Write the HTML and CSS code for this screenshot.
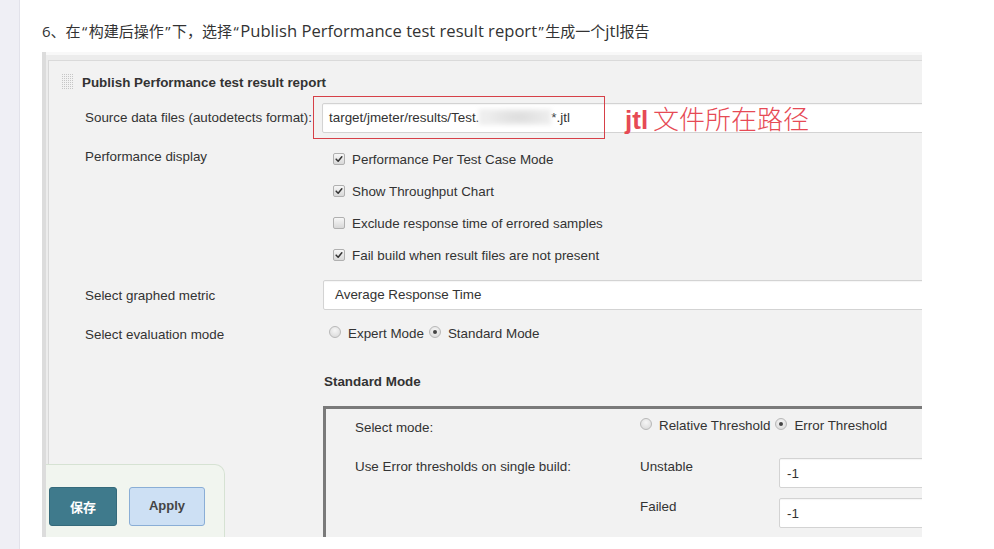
FILE: index.html
```html
<!DOCTYPE html>
<html lang="zh-CN">
<head>
<meta charset="utf-8">
<title>Publish Performance test result report</title>
<link rel="stylesheet" href="styles.css">
</head>
<body>
<div class="page">
  <aside class="rail"></aside>
  <main class="article">
    <p class="step">6、在<span class="q">“</span>构建后操作<span class="q">”</span>下，选择<span class="q">“</span><span class="lat">Publish Performance test result report</span><span class="q">”</span>生成一个<span class="lat">jtl</span>报告</p>
    <div class="shot">
      <div class="cfg">
        <div class="sec-head"><span class="grip"></span><span class="sec-title">Publish Performance test result report</span></div>

        <div class="row row-src">
          <div class="lbl">Source data files (autodetects format):</div>
          <div class="ctl"><div class="field field-src">target/jmeter/results/Test.<span class="smudge"></span>*.jtl</div></div>
        </div>

        <div class="row row-perf">
          <div class="lbl lbl-top">Performance display</div>
          <div class="ctl checks">
            <label class="chk"><span class="box on"><svg viewBox="0 0 12 12"><path d="M2.6 6.2 L5 8.6 L9.4 3.4" fill="none" stroke="#333" stroke-width="1.8" stroke-linecap="round" stroke-linejoin="round"/></svg></span>Performance Per Test Case Mode</label>
            <label class="chk"><span class="box on"><svg viewBox="0 0 12 12"><path d="M2.6 6.2 L5 8.6 L9.4 3.4" fill="none" stroke="#333" stroke-width="1.8" stroke-linecap="round" stroke-linejoin="round"/></svg></span>Show Throughput Chart</label>
            <label class="chk"><span class="box"></span>Exclude response time of errored samples</label>
            <label class="chk"><span class="box on"><svg viewBox="0 0 12 12"><path d="M2.6 6.2 L5 8.6 L9.4 3.4" fill="none" stroke="#333" stroke-width="1.8" stroke-linecap="round" stroke-linejoin="round"/></svg></span>Fail build when result files are not present</label>
          </div>
        </div>

        <div class="row row-metric">
          <div class="lbl">Select graphed metric</div>
          <div class="ctl"><div class="field field-select">Average Response Time</div></div>
        </div>

        <div class="row row-eval">
          <div class="lbl">Select evaluation mode</div>
          <div class="ctl radios">
            <span class="radio"></span><span class="rtext">Expert Mode</span>
            <span class="radio on"></span><span class="rtext">Standard Mode</span>
          </div>
        </div>

        <div class="row row-std">
          <div class="lbl"></div>
          <div class="ctl std-title">Standard Mode</div>
        </div>

        <div class="row row-box">
          <div class="lbl"></div>
          <div class="ctl">
            <div class="mode-box">
              <div class="mrow mrow-sel">
                <div class="mlbl">Select mode:</div>
                <div class="radios radios-in">
                  <span class="radio"></span><span class="rtext">Relative Threshold</span>
                  <span class="radio on"></span><span class="rtext">Error Threshold</span>
                </div>
              </div>
              <div class="mrow mrow-th">
                <div class="mlbl">Use Error thresholds on single build:</div>
                <div class="sublbl">Unstable</div>
                <div class="field field-num">-1</div>
              </div>
              <div class="mrow mrow-th mrow-fail">
                <div class="mlbl"></div>
                <div class="sublbl">Failed</div>
                <div class="field field-num">-1</div>
              </div>
            </div>
          </div>
        </div>
      </div>

      <div class="note-box"></div>
      <div class="note-text"><b>jtl</b>文件所在路径</div>

      <div class="savebar">
        <button class="btn btn-save">保存</button>
        <button class="btn btn-apply">Apply</button>
      </div>
    </div>
  </main>
</div>
</body>
</html>
```

FILE: styles.css
```css
* { box-sizing: border-box; }
html, body { margin: 0; background: #fff; }
body { font-family: "Liberation Sans", Arial, sans-serif; color: #333; }

.page { display: flex; min-height: 549px; }
.rail { width: 20px; flex: none; background: #efeff5; border-right: 1px solid #e2e2ea; }
.article { flex: 1; padding-left: 22px; overflow: hidden; }

.step {
  margin: 0;
  padding-top: 19px;
  height: 52px;
  font: 15px/24px "Open Sans", "Noto Sans CJK SC", sans-serif;
  color: #333;
  white-space: nowrap;
}
.step .lat { font-size: 16.6px; }
.step .q { margin: 0 1.5px; }

.shot {
  position: relative;
  width: 880px;
  height: 485px;
  overflow: hidden;
  border-left: 4px solid #dcdcdc;
  background: linear-gradient(#f8f8f8 0, #f8f8f8 3px, #ececec 3px);
}

.cfg {
  margin: 8px 0 0 2px;
  width: 1200px;
  height: 600px;
  border-top: 1px solid #dadada;
  border-left: 1px solid #d8d8d8;
  background: #f2f2f2;
  font-size: 13.4px;
  color: #333;
}

.sec-head { display: flex; align-items: center; height: 42px; padding-left: 13px; }
.grip {
  width: 11px; height: 17px; margin-right: 9px; margin-top: -2px;
  background-image: linear-gradient(#f2f2f2 50%, transparent 50%), linear-gradient(90deg, #c6c6c6 50%, transparent 50%);
  background-size: 2px 2px;
}
.sec-title { font-weight: bold; color: #333; }

.row { display: flex; }
.lbl { width: 274px; flex: none; padding-left: 36px; white-space: nowrap; }
.ctl { flex: 1; }

.row-src { height: 30px; align-items: center; }
.row-src .lbl { margin-top: -2px; }
.field {
  background: #fff;
  border: 1px solid #d3d3d3;
  border-radius: 2px;
  box-shadow: inset 0 1px 1px rgba(0,0,0,.04);
  white-space: nowrap;
  color: #333;
}
.field-src { height: 30px; line-height: 28px; padding-left: 6px; margin-left: -1px; }
.smudge {
  display: inline-block;
  width: 72px; height: 16px;
  vertical-align: middle;
  margin-top: -2px;
  background: radial-gradient(ellipse 45% 60% at 55% 50%, #dcdcdc, #e6e6e6 60%, #eeeeee 100%);
  filter: blur(2px);
}

.row-perf { margin-top: 10px; }
.lbl-top { line-height: 28px; }
.checks { display: flex; flex-direction: column; }
.chk { display: flex; align-items: center; height: 32px; padding-left: 10px; }
.box {
  width: 12px; height: 12px; margin-right: 7px;
  border: 1px solid #b0b0b0; border-radius: 2px;
  background: linear-gradient(#f7f7f7, #d8d8d8);
  display: flex; align-items: center; justify-content: center;
}
.box svg { width: 12px; height: 12px; display: block; }

.row-metric { margin-top: 9px; height: 30px; align-items: center; }
.field-select { height: 30px; line-height: 28px; padding-left: 11px; }

.row-eval { margin-top: 9px; height: 28px; align-items: center; }
.row-eval .lbl { margin-top: 2px; }
.radios { display: flex; align-items: center; padding-left: 6px; }
.radio {
  width: 12px; height: 12px; margin-right: 7px; flex: none;
  border: 1px solid #b8b8b8; border-radius: 50%;
  background: radial-gradient(circle at 50% 35%, #f6f6f6, #d6d6d6);
  display: flex; align-items: center; justify-content: center;
  margin-top: -2px;
}
.radio.on::after { content: ""; width: 4px; height: 4px; border-radius: 50%; background: #444; }
.rtext { margin-right: 5px; }

.row-std { margin-top: 20px; height: 28px; align-items: center; }
.std-title { font-weight: bold; padding-left: 1px; }

.row-box { margin-top: 11px; }
.mode-box {
  border-top: 3px solid #7a7a7a;
  border-left: 3px solid #7a7a7a;
  padding-top: 3px;
  height: 200px;
}
.mrow { display: flex; }
.mlbl { width: 314px; flex: none; padding-left: 29px; white-space: nowrap; }
.mrow-sel { height: 26px; align-items: center; }
.mrow-sel .mlbl { padding-top: 5px; }
.radios-in { padding-left: 0; }
.mrow-th { margin-top: 20px; }
.mrow-fail { margin-top: 10px; }
.mrow-th .mlbl, .sublbl { line-height: 18px; }
.sublbl { width: 139px; flex: none; }
.field-num { width: 300px; height: 30px; padding: 3px 0 0 7px; }
.mrow-th .field-num { line-height: 24px; }

.note-box {
  position: absolute;
  left: 267px; top: 44px;
  width: 292px; height: 43px;
  border: 1px solid #d64048;
}
.note-text {
  position: absolute;
  left: 579px; top: 51px;
  font: 300 26px/30px "Noto Sans CJK SC", sans-serif;
  color: #e64a55;
  white-space: nowrap;
}
.note-text b { font: bold 26px/30px "Liberation Sans", Arial, sans-serif; margin-right: 5px; }

.savebar {
  position: absolute;
  left: 0; top: 412px;
  width: 179px; height: 90px;
  display: flex; gap: 12px;
  padding: 22px 0 0 3px;
  background: #f1f5ef;
  border: 1px solid #d6e2d3;
  border-left: 0;
  border-top-right-radius: 10px;
}
.btn {
  height: 39px;
  border-radius: 3px;
  font-weight: bold;
  font-size: 13px;
  cursor: pointer;
  padding: 0;
}
.btn-save {
  width: 68px;
  background: #3f7a8c;
  border: 1px solid #356a7b;
  color: #fff;
  font-family: "Noto Sans CJK SC", sans-serif;
}
.btn-apply {
  width: 76px;
  background: #cde0f4;
  border: 1px solid #8aaed6;
  color: #444;
  font-family: "Liberation Sans", Arial, sans-serif;
  padding-bottom: 3px;
}
```
